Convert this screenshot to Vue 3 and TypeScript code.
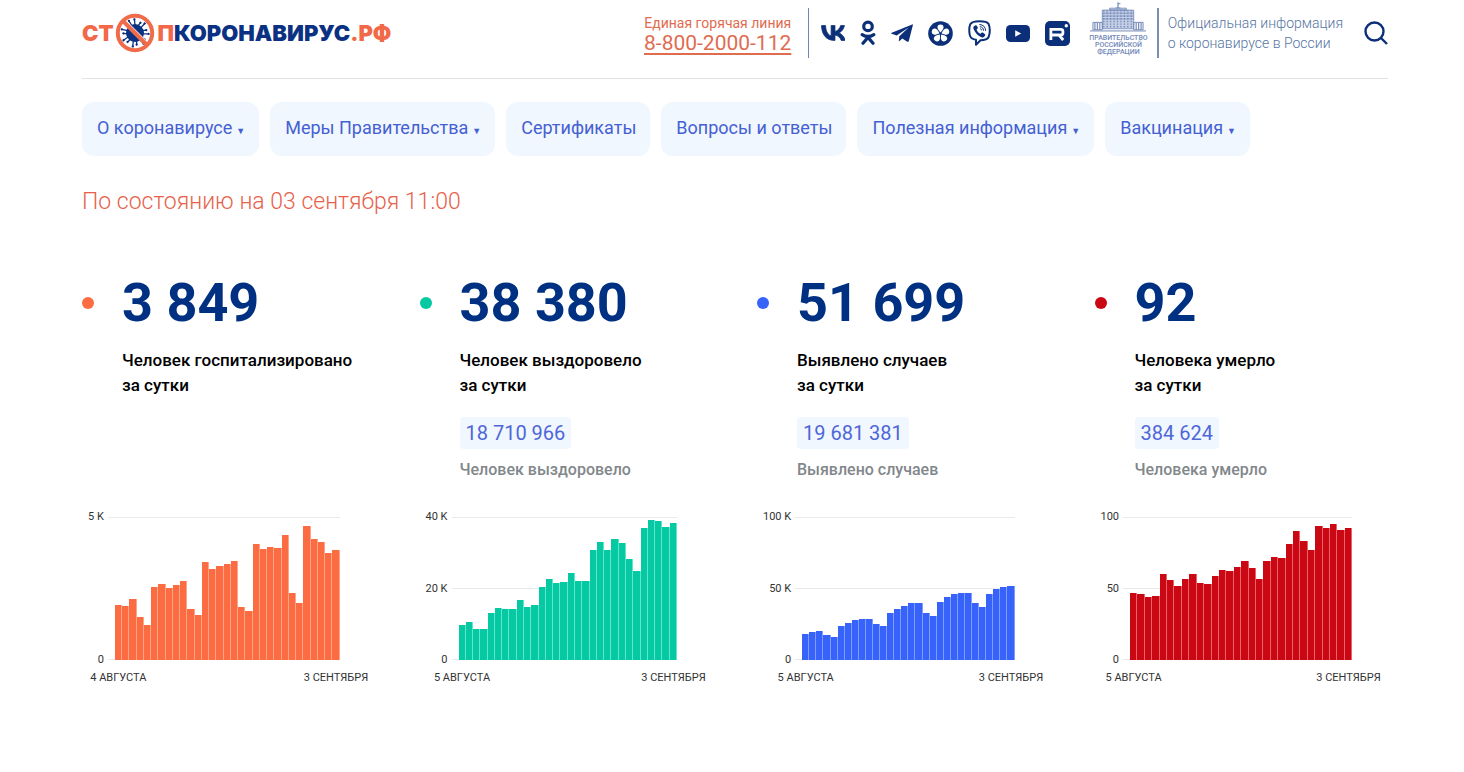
<script setup lang="ts">
interface NavItem {
  title: string
  menu: boolean
}

interface Stat {
  id: string
  color: string
  edge: string
  daily: string
  label: string
  total?: string
  caption?: string
  max: number
  ticks: string[]
  from: string
  to: string
  values: number[]
}

const nav: NavItem[] = [
  { title: 'О коронавирусе', menu: true },
  { title: 'Меры Правительства', menu: true },
  { title: 'Сертификаты', menu: false },
  { title: 'Вопросы и ответы', menu: false },
  { title: 'Полезная информация', menu: true },
  { title: 'Вакцинация', menu: true },
]

const stats: Stat[] = [
  {
    id: 'hospital',
    color: '#fc6c43',
    edge: '#ffa487',
    daily: '3 849',
    label: 'Человек госпитализировано',
    max: 5000,
    ticks: ['5 K', '0'],
    from: '4 АВГУСТА',
    to: '3 СЕНТЯБРЯ',
    values: [
      1916, 1904, 2138, 1507, 1238, 2570, 2675, 2523, 2617, 2769, 1799, 1589, 3423, 3178, 3271, 3364,
      3458, 1857, 1706, 4065, 3867, 3937, 3914, 4369, 2336, 1986, 4685, 4241, 4136, 3738, 3849,
    ],
  },
  {
    id: 'recovered',
    color: '#06c8a2',
    edge: '#5be8cb',
    daily: '38 380',
    label: 'Человек выздоровело',
    total: '18 710 966',
    caption: 'Человек выздоровело',
    max: 40000,
    ticks: ['40 K', '20 K', '0'],
    from: '5 АВГУСТА',
    to: '3 СЕНТЯБРЯ',
    values: [
      9720, 10750, 8690, 8690, 13080, 14580, 14200, 14300, 16920, 14950, 15330, 20560, 22710, 21500,
      21870, 24300, 22240, 22240, 30840, 32990, 30750, 33830, 32710, 28220, 24860, 36820, 39160,
      38970, 37100, 38380,
    ],
  },
  {
    id: 'cases',
    color: '#3763fb',
    edge: '#7f9dff',
    daily: '51 699',
    label: 'Выявлено случаев',
    total: '19 681 381',
    caption: 'Выявлено случаев',
    max: 100000,
    ticks: ['100 K', '50 K', '0'],
    from: '5 АВГУСТА',
    to: '3 СЕНТЯБРЯ',
    values: [
      18460, 19860, 20330, 17760, 16120, 23830, 25930, 27800, 28740, 28970, 25230, 23830, 33180,
      35980, 37620, 39950, 39720, 33180, 31070, 40420, 44160, 46500, 47200, 46960, 39720, 37150,
      46500, 49770, 50930, 51699,
    ],
  },
  {
    id: 'deaths',
    color: '#c90813',
    edge: '#f0626b',
    daily: '92',
    label: 'Человека умерло',
    total: '384 624',
    caption: 'Человека умерло',
    max: 100,
    ticks: ['100', '50', '0'],
    from: '5 АВГУСТА',
    to: '3 СЕНТЯБРЯ',
    values: [
      47, 46, 44, 45, 60, 56, 52, 57, 60, 54, 53, 59, 63, 62, 65, 69, 64, 57, 69, 72, 71, 81, 90, 83,
      77, 94, 92, 95, 91, 92,
    ],
  },
]

const petals = [0, 72, 144, 216, 288]
const spikes = Array.from({ length: 15 }, (_, i) => i * 24)
const columns = Array.from({ length: 9 }, (_, i) => 14 + i * 3.5)
const wings = [5, 7.5, 10, 47, 49.5, 52]

function barHeight(value: number, max: number): string {
  return `${(value / max) * 100}%`
}
</script>

<template>
  <div class="page">
    <header class="header">
      <a class="logo" href="#" aria-label="СТОПКОРОНАВИРУС.РФ">
        <span class="warm">СТ</span>
        <svg class="virus" viewBox="0 0 40 40" aria-hidden="true">
          <g stroke="#0b3182" stroke-width="1.3" stroke-linecap="round">
            <g v-for="a in spikes" :key="a" :transform="`rotate(${a} 20 20)`">
              <line x1="20" y1="12" :x2="a % 48 ? 20.8 : 19.4" :y2="a % 48 ? 8.4 : 6.4" />
              <circle :cx="a % 48 ? 20.8 : 19.4" :cy="a % 48 ? 8.4 : 6.4" r="0.5" />
            </g>
          </g>
          <circle cx="20" cy="20" r="9" fill="#0b3182" />
          <line x1="8.4" y1="7.6" x2="32.4" y2="31.6" stroke="#fff" stroke-width="4.2" />
          <line x1="8" y1="8" x2="32" y2="32" stroke="#ef6b4a" stroke-width="4" />
          <circle cx="20" cy="20" r="17.2" fill="none" stroke="#ef6b4a" stroke-width="4" />
        </svg>
        <span class="warm">П</span><span>КОРОНАВИРУС</span><span class="warm">.РФ</span>
      </a>

      <div class="hotline">
        <span>Единая горячая линия</span>
        <a href="tel:88002000112">8-800-2000-112</a>
      </div>

      <nav class="social" aria-label="Социальные сети">
        <a href="#" aria-label="ВКонтакте">
          <svg width="24" height="16" viewBox="7.4 14 32.2 21.2">
            <path
              fill="currentColor"
              stroke="currentColor"
              stroke-width="1"
              stroke-linejoin="round"
              d="M25.54 34.58c-10.94 0-17.18-7.5-17.44-19.98h5.48c.18 9.16 4.22 13.04 7.42 13.84V14.6h5.16v7.9c3.16-.34 6.48-3.94 7.6-7.9h5.16c-.86 4.88-4.46 8.48-7.02 9.96 2.56 1.2 6.66 4.34 8.22 10.02h-5.68c-1.22-3.8-4.26-6.74-8.28-7.14v7.14z"
            />
          </svg>
        </a>
        <a href="#" aria-label="Одноклассники">
          <svg width="16" height="26" viewBox="0 0 16 26">
            <g fill="none" stroke="currentColor" stroke-width="3.2" stroke-linecap="round">
              <circle cx="8" cy="6.4" r="4.3" />
              <path d="M2.2 14.6Q8 18.4 13.8 14.6M8 17.4 3 23.2M8 17.4 13 23.2" />
            </g>
          </svg>
        </a>
        <a href="#" aria-label="Telegram">
          <svg width="22" height="18" viewBox="0 0 22 18">
            <path
              fill="currentColor"
              d="M21.2.4.7 8.7c-.7.3-.6.9 0 1.1l5 1.6L17.6 3.6 8.3 12.2l-.5 5.1c.5 0 .8-.2 1-.5l2.5-2.4 5 3.3c.7.3 1.2.1 1.5-.7L21.9 1c.1-.6-.2-.8-.7-.6z"
            />
          </svg>
        </a>
        <a href="#" aria-label="ICQ">
          <svg width="25" height="25" viewBox="0 0 25 25">
            <circle cx="12.5" cy="12.5" r="12.3" fill="currentColor" />
            <path
              v-for="a in petals"
              :key="a"
              :transform="`rotate(${a} 12.5 12.5)`"
              fill="#fff"
              d="M12.5 11.4C10.2 9 9.2 7.5 9.5 5.8 9.7 4.3 10.9 3.5 12.5 3.5s2.8.8 3 2.3c.3 1.7-.7 3.2-3 5.6z"
            />
          </svg>
        </a>
        <a href="#" aria-label="Viber">
          <svg width="23" height="26" viewBox="0 0 23 26">
            <path
              fill="none"
              stroke="currentColor"
              stroke-width="2"
              stroke-linejoin="round"
              d="M11.5 1.2C17 1.2 19.5 2 20.6 4c1.6 3 1.6 9.5 0 13-1.2 2.5-4.6 3.2-8.1 3.2L8 24.8v-5c-3-.6-4.9-1.3-5.7-3.3-1.4-3.3-1.4-9.3 0-12.3C3.4 2 6 1.2 11.5 1.2z"
            />
            <path
              fill="currentColor"
              d="M7.5 5.3 6 6.3c-.8.8-.8 1.6-.4 2.7 1.6 4.1 4.4 6.9 8.3 8.4 1 .3 1.6.1 2.2-.6l1-1.4c.3-.5.2-1-.3-1.400l-2-1.400c-.5-.3-1-.3-1.300.1l-.8 1c-1.900-.7-3.500-2.200-4.100-4.300l.9-.8c.5-.4.500-.9.200-1.400L8.500 5.500c-.3-.4-.6-.4-1-.2z"
            />
            <path
              fill="none"
              stroke="currentColor"
              stroke-width="1"
              stroke-linecap="round"
              d="M11.8 4.5c3.6.2 5.7 2.5 5.8 6M12.2 6.7c2.1.2 3.2 1.4 3.3 3.6M12.5 8.8c.7.1 1 .5 1.1 1.2"
            />
          </svg>
        </a>
        <a href="#" aria-label="YouTube">
          <svg width="24" height="17" viewBox="0 0 24 17">
            <rect width="24" height="17" rx="4.5" fill="currentColor" />
            <path fill="#fff" d="M9.2 5.2v6.6l6-3.3z" />
          </svg>
        </a>
        <a href="#" aria-label="Rutube">
          <svg width="25" height="25" viewBox="0 0 25 25">
            <rect width="25" height="25" rx="5" fill="currentColor" />
            <path
              fill="none"
              stroke="#fff"
              stroke-width="2.8"
              d="M5.9 19V8.4h9.8q2.2 0 2.2 2v1.6q0 2-2.2 2H5.9M14 14l4.2 5"
            />
            <circle cx="21.3" cy="4.8" r="1.7" fill="#fff" />
          </svg>
        </a>
      </nav>

      <div class="official">
        <a class="gov" href="#">
          <svg width="56" height="30" viewBox="0 0 57 30" aria-hidden="true">
            <g stroke="#7288b8" fill="none">
              <path stroke-width="1.2" d="M28.5 0v6M28 1.5h3M26 6h5" />
              <path fill="#c3cee5" stroke-width=".8" d="M12.5 8h32v19h-32zM20 6h17v2H20z" />
              <path stroke-width=".7" d="M12.5 11h32M12.5 14h32M12.5 17h32" />
              <path stroke-width="1" d="M3 20.5h9.5V28H3zM44.5 20.5H54V28h-9.5zM0 29.2h57" />
              <path
                v-for="x in columns"
                :key="x"
                stroke-width="1.3"
                :d="`M${x} 8v19`"
                stroke-dasharray="1.5 1.2"
              />
              <path v-for="x in wings" :key="x" stroke-width="1.2" :d="`M${x} 21v7`" />
            </g>
          </svg>
          <span>ПРАВИТЕЛЬСТВО<br />РОССИЙСКОЙ<br />ФЕДЕРАЦИИ</span>
        </a>
        <p>Официальная информация<br />о коронавирусе в России</p>
      </div>

      <button class="search" type="button" aria-label="Поиск">
        <svg width="24" height="24" viewBox="0 0 24 24">
          <g fill="none" stroke="currentColor" stroke-width="2.4">
            <circle cx="10.5" cy="10.5" r="9" />
            <path d="M17 17l6 6" />
          </g>
        </svg>
      </button>
    </header>

    <nav class="menu" aria-label="Разделы">
      <a v-for="item in nav" :key="item.title" href="#">
        {{ item.title }}<span v-if="item.menu" class="caret">▼</span>
      </a>
    </nav>

    <main>
      <h1>По состоянию на 03 сентября 11:00</h1>

      <div class="stats">
        <section v-for="s in stats" :key="s.id" :class="['stat', s.id]">
          <div class="daily">
            <i class="dot" :style="{ background: s.color }"></i>
            <strong>{{ s.daily }}</strong>
          </div>
          <div class="details">
            <p class="label">{{ s.label }}<br />за сутки</p>
            <template v-if="s.total">
              <span class="total">{{ s.total }}</span>
              <p class="caption">{{ s.caption }}</p>
            </template>
          </div>

          <div class="chart">
            <div class="ticks">
              <span v-for="t in s.ticks" :key="t">{{ t }}</span>
            </div>
            <div class="plot">
              <div class="lines">
                <i v-for="t in s.ticks" :key="t"></i>
              </div>
              <div class="bars">
                <i
                  v-for="(v, i) in s.values"
                  :key="i"
                  :style="{ height: barHeight(v, s.max), background: s.color, borderColor: s.edge }"
                ></i>
              </div>
            </div>
            <div class="dates">
              <span>{{ s.from }}</span>
              <span>{{ s.to }}</span>
            </div>
          </div>
        </section>
      </div>
    </main>
  </div>
</template>

<style>
body {
  margin: 0;
  background: #fff;
}
</style>

<style scoped>
.page {
  padding: 0 76px 40px 82px;
  font-family: Roboto, "Liberation Sans", sans-serif;
  color: #000;
}

a {
  color: inherit;
  text-decoration: none;
}

p,
h1 {
  margin: 0;
}

.header {
  display: flex;
  align-items: center;
  height: 66px;
  padding-bottom: 12px;
  border-bottom: 1px solid #dfe1e4;
}

.logo {
  display: flex;
  align-items: center;
  font-family: Inter, "Liberation Sans", sans-serif;
  font-size: 22px;
  font-weight: 900;
  line-height: 40px;
  color: #0b3182;
}

.warm {
  color: #f2694a;
}

.virus {
  width: 40px;
  height: 40px;
  margin: 0 3px 0 1px;
}

.hotline {
  display: flex;
  flex-direction: column;
  align-items: flex-end;
  margin-left: auto;
  padding-right: 17px;
  color: #df6c50;
  font-size: 14px;
  line-height: 20px;
}

.hotline a {
  font-size: 21px;
  text-decoration: underline;
  text-decoration-thickness: 2px;
  text-underline-offset: 3px;
}

.social {
  display: flex;
  align-items: center;
  gap: 15px;
  height: 50px;
  padding-left: 12px;
  border-left: 1px solid #6f86ae;
  color: #0c2f79;
}

.social a,
.social svg,
.search svg {
  display: block;
}

.official {
  display: flex;
  align-items: center;
  margin-left: 19px;
  color: #56749f;
}

.gov {
  display: flex;
  flex-direction: column;
  align-items: center;
  height: 50px;
  padding-right: 9px;
  border-right: 2px solid #7890b4;
  color: #7288b8;
  font-size: 7px;
  font-weight: 500;
  line-height: 7px;
  text-align: center;
}

.gov svg {
  flex: none;
  margin-top: -6px;
  margin-bottom: 3px;
}

.official p {
  padding-left: 9px;
  font-size: 14px;
  font-weight: 350;
  line-height: 20px;
}

.search {
  margin-left: 21px;
  padding: 0;
  border: 0;
  background: none;
  color: #0c2f79;
}

.menu {
  display: flex;
  flex-wrap: wrap;
  gap: 11px;
  margin-top: 23px;
}

.menu a {
  height: 54px;
  padding: 0 14px 0 15px;
  border-radius: 12px;
  background: #f0f7fe;
  color: #4560d3;
  font-size: 18px;
  line-height: 52px;
}

.caret {
  margin-left: 4px;
  font-size: 9px;
  line-height: 1;
}

h1 {
  margin-top: 31px;
  color: #e7614a;
  font-size: 23px;
  font-weight: 350;
  line-height: 30px;
}

.stats {
  display: grid;
  grid-template-columns: repeat(4, 1fr);
  gap: 44px;
  margin-top: 54px;
}

.stat {
  display: flex;
  flex-direction: column;
}

.daily {
  display: flex;
  align-items: center;
  gap: 28px;
}

.dot {
  width: 12px;
  height: 12px;
  border-radius: 50%;
}

strong {
  color: #003082;
  font-size: 54px;
  font-weight: 700;
  line-height: 64px;
}

.details {
  padding: 13px 0 35px 40px;
}

.label {
  font-size: 17px;
  font-weight: 500;
  line-height: 25px;
  white-space: nowrap;
}

.total {
  display: inline-block;
  margin-top: 19px;
  padding: 0 6px;
  border-radius: 4px;
  background: #f0f7fe;
  color: #4f66d8;
  font-size: 20px;
  line-height: 32px;
}

.caption {
  margin-top: 9px;
  color: #82878b;
  font-size: 16px;
  font-weight: 500;
  line-height: 24px;
}

.chart {
  display: grid;
  grid-template-columns: auto 1fr;
  column-gap: 4px;
  margin-top: auto;
  padding: 0 36px 0 6px;
  color: #333;
  font-size: 11px;
}

.ticks,
.lines {
  display: flex;
  flex-direction: column;
  justify-content: space-between;
}

.ticks {
  margin: -7px 0;
  line-height: 14px;
  text-align: right;
}

.plot {
  display: grid;
  height: 143px;
}

.lines,
.bars {
  grid-area: 1 / 1;
}

.lines i {
  height: 1px;
  background: #e9e9ea;
}

.bars {
  position: relative;
  display: flex;
  align-items: flex-end;
  margin-left: 7px;
}

.bars i {
  flex: 1;
  box-sizing: border-box;
  border-right: 1px solid;
}

.dates {
  grid-column: 2;
  display: flex;
  justify-content: space-between;
  margin: 11px 0 0 7px;
  line-height: 14px;
}

.dates span {
  display: flex;
  justify-content: center;
  width: 7px;
  white-space: nowrap;
}
</style>
